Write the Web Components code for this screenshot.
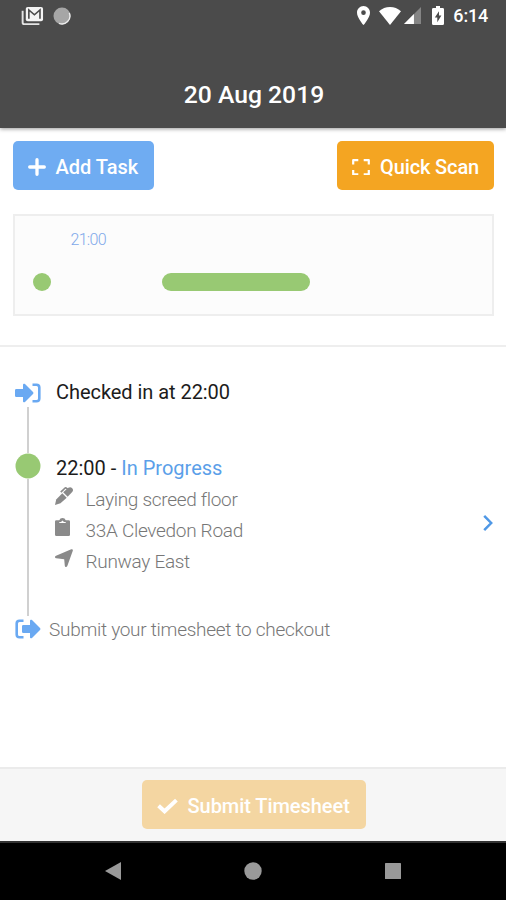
<!DOCTYPE html>
<html lang="en">
<head>
<meta charset="utf-8">
<title>Timesheet</title>
<style>
html, body { margin: 0; height: 100%; background: #fff; }
body { font-family: Roboto, "Liberation Sans", sans-serif; color: #1c1c1c; overflow: hidden; }
</style>
</head>
<body>
<timesheet-app></timesheet-app>
<script>
const define = (name, html, setup) => {
  const template = document.createElement('template');
  template.innerHTML = html;
  customElements.define(name, class extends HTMLElement {
    constructor() {
      super();
      this.attachShadow({ mode: 'open' }).append(template.content.cloneNode(true));
    }
    connectedCallback() { if (setup) setup(this, this.shadowRoot); }
  });
};

const icons = {
  mail: ['0 0 24 21', '<path d="M1.700 5v12.300c0 1 .7 1.700 1.700 1.700h15.800" fill="none" stroke="#e4e4e4" stroke-width="2"/><path d="M7 1h14q2 0 2 2v11q0 2-2 2H7q-2 0-2-2V3q0-2 2-2z" fill="#f4f4f4"/><path d="M8.200 13.500V4.200l5.800 5 5.800-5v9.300" fill="none" stroke="#4b4b4b" stroke-width="1.700"/>'],
  ball: ['0 0 18 18', '<circle cx="9" cy="9" r="8.500" fill="#a6a6a6"/><path d="M16.300 6A7.900 7.900 0 0 1 6 16.300" fill="none" stroke="#eee" stroke-width="1.300"/>'],
  pin: ['5 2 14 20', '<path fill="#fff" d="M12 2C8.100 2 5 5.100 5 9c0 5.300 7 13 7 13s7-7.700 7-13c0-3.900-3.100-7-7-7zm0 9.500a2.500 2.500 0 1 1 0-5 2.500 2.500 0 0 1 0 5z"/>'],
  wifi: ['0 0 22 18', '<path fill="#fff" d="M11 18 0 4.300Q4.700 0 11 0t11 4.300z"/>'],
  cell: ['0 0 18 18', '<path fill="#858585" d="M18 0v18H0z"/><path fill="#fff" d="M10.500 7.500V18H0z"/>'],
  battery: ['0 0 12 20', '<path fill="#fff" d="M4 0h4v2h2.600Q12 2 12 3.400v15.200Q12 20 10.600 20H1.400Q0 20 0 18.600V3.400Q0 2 1.400 2H4z"/><path fill="#4b4b4b" d="M7 5.500 2.800 12H5.300v5L9.400 10H7z"/>'],
  plus: ['0 0 18 18', '<path d="M9 1.700v14.600M1.700 9h14.600" stroke="#fff" stroke-width="3.300" stroke-linecap="round"/>'],
  scan: ['0 0 18 16', '<path d="M1.200 5.300V1.200H6.300M11.700 1.200h5.100V5.300M16.800 10.700v4.100H11.700M6.300 14.800H1.200V10.700" fill="none" stroke="#fff" stroke-width="2.200" stroke-linejoin="round"/>'],
  check: ['0 0 20 15', '<path d="m1.500 7.300 5.700 5.200L18.500 2" fill="none" stroke="#fff" stroke-width="3.800"/>'],
  login: ['0 0 26 20', '<path fill="#6aa9f2" d="M1.300 6H8V1.800c0-1.100 1.200-1.500 2-.8l8 8q1 1 0 2l-8 8c-.8.700-2 .3-2-.8V14H1.300Q0 14 0 12.700V7.300Q0 6 1.300 6z"/><path d="M17.500 1.700h4q2.800 0 2.800 2.800v11q0 2.800-2.800 2.800h-4" fill="none" stroke="#6aa9f2" stroke-width="2.600"/>'],
  logout: ['0 0 26 20', '<path d="M8.500 1.700h-4q-2.800 0-2.800 2.800v11q0 2.800 2.800 2.800h4" fill="none" stroke="#6aa9f2" stroke-width="2.600"/><path fill="#6aa9f2" d="M8.300 6H15V1.800c0-1.100 1.200-1.500 2-.8l8 8q1 1 0 2l-8 8c-.8.700-2 .3-2-.8V14H8.300Q7 14 7 12.700V7.300Q7 6 8.300 6z"/>'],
  pen: ['0 0 18 18', '<path fill="#8a8a8a" d="M0 18 1.200 12.500 7.300 6.300 11.700 10.700 5.500 16.200z"/><path fill="#8a8a8a" d="M8.200 5.300 13.300.8q2-1.300 3.700.2 1.800 1.800.4 3.700L12.700 9.800z"/><path d="M5.800 5.200 9.600 1.500q1-1 2-.2l1 .8" fill="none" stroke="#8a8a8a" stroke-width="1.700"/>'],
  clipboard: ['0 0 14 18', '<path fill="#8a8a8a" d="M1.300 2.200H4Q4.700 0 7 0t3 2.200h2.700Q14 2.200 14 3.500v13.200q0 1.300-1.300 1.300H1.300Q0 18 0 16.700V3.500q0-1.300 1.300-1.300z"/><path d="M4 5h6V4.100H8.400L7 2.400 5.600 4.100H4z" fill="#fff"/>'],
  arrow: ['0 0 18 18', '<path fill="#8a8a8a" d="M16.300.2Q18.200-.2 17.800 1.700l-5.500 15.300q-.5 1-1.300 1-1.200 0-1.200-1.200L9.200 10.200 1.200 9.200q-1.200-.2-1.200-1.300 0-.8 1-1.200z"/>'],
  chevron: ['0 0 12 18', '<path d="m2.200 1.800 7 7.200-7 7.200" fill="none" stroke="#4f98e6" stroke-width="2.500"/>'],
  back: ['0 0 16 18', '<path fill="#999" d="M16 0v18L0 9z"/>'],
  home: ['0 0 18 18', '<circle cx="9" cy="9" r="8.700" fill="#999"/>'],
  recent: ['0 0 16 16', '<rect width="16" height="16" rx=".6" fill="#999"/>'],
  dot: ['0 0 26 26', '<circle cx="13" cy="13" r="12.500" fill="#98c973"/>']
};

define('ui-icon', `<style>:host{display:block;flex:none}svg{display:block;width:100%;height:100%}</style><svg aria-hidden="true" preserveAspectRatio="none"></svg>`, (el, root) => {
  const [box, shapes] = icons[el.getAttribute('name')];
  const svg = root.querySelector('svg');
  svg.setAttribute('viewBox', box);
  svg.innerHTML = shapes;
  el.style.width = el.getAttribute('w') + 'px';
  el.style.height = el.getAttribute('h') + 'px';
});

define('status-bar', `<style>
:host{display:flex;align-items:center;box-sizing:border-box;height:31px;padding:0 18px 0 21px;color:#fff;font-size:18px;font-weight:500;line-height:31px;letter-spacing:-.2px}
.end{display:flex;align-items:center;margin-left:auto}
.battery{margin:0 9px 0 11px}
</style>
<ui-icon name="mail" w="23" h="20"></ui-icon><ui-icon name="ball" w="18" h="18" style="margin-left:9px"></ui-icon>
<div class="end"><ui-icon name="pin" w="13" h="19" style="margin-right:9px"></ui-icon><ui-icon name="wifi" w="22" h="18" style="margin-right:3px"></ui-icon><ui-icon name="cell" w="17" h="17"></ui-icon><ui-icon class="battery" name="battery" w="12" h="19"></ui-icon><slot></slot></div>`);

define('app-header', `<style>
:host{display:block;height:128px;background:#4b4b4b;box-shadow:0 1px 4px rgba(0,0,0,.4);position:relative;flex:none}
h1{margin:0;padding:48px 0 0 2px;font-size:24.700px;line-height:32px;font-weight:500;text-align:center;color:#fff}
</style><slot name="status"></slot><h1><slot></slot></h1>`);

define('action-button', `<style>
:host{display:block;flex:none}
button{display:flex;align-items:center;gap:10px;box-sizing:border-box;width:100%;height:49px;padding:3px 15px 0;border:0;border-radius:5px;background:var(--fill);color:#fff;font:500 20px/28px Roboto,"Liberation Sans",sans-serif;letter-spacing:var(--tracking,0);white-space:nowrap}
</style><button><slot name="icon"></slot><span><slot></slot></span></button>`);

define('time-track', `<style>
:host{display:block;box-sizing:border-box;height:102px;margin:0 12px 0 12.500px;border:2px solid #eee;background:#fcfcfc;padding:13.500px 0 0 18px}
.hour{padding-left:38px;font-size:16px;line-height:20px;font-weight:300;color:#7fa9ea;letter-spacing:-.7px}
.track{display:flex;gap:111px;margin-top:23px}
.track i{height:18px;border-radius:9px;background:#98c973}
</style><div class="hour"><slot></slot></div><div class="track"><i style="width:18px"></i><i style="width:148px"></i></div>`);

define('timeline-entry', `<style>
:host{display:flex;box-sizing:border-box}
.rail{display:flex;flex-direction:column;align-items:center;width:26px;flex:none}
.line{flex:1;width:2px;background:#d0d0d0}
:host([last]) .line{display:none}
.body{flex:1;padding-left:var(--indent,15px)}
</style><div class="rail"><slot name="marker"></slot><div class="line"></div></div><div class="body"><slot></slot></div>`);

define('detail-row', `<style>
:host{display:flex;align-items:flex-start;height:31px;font-weight:300;font-size:19px;line-height:31px;color:#777;letter-spacing:-.3px}
.icon{width:30px;flex:none;padding-top:3px;margin-left:-1px}
.text{padding-left:.5px}
</style><div class="icon"><slot name="icon"></slot></div><div class="text"><slot></slot></div>`);

define('nav-bar', `<style>
:host{display:flex;align-items:center;justify-content:space-between;box-sizing:border-box;height:59px;padding:0 105px 2px;background:#000;border-top:2px solid #333;flex:none}
</style><ui-icon name="back" w="16" h="18"></ui-icon><ui-icon name="home" w="18" h="18"></ui-icon><ui-icon name="recent" w="16" h="16"></ui-icon>`);

define('timesheet-app', `<style>
:host{display:flex;flex-direction:column;width:506px;height:900px;background:#fff}
.actions{display:flex;justify-content:space-between;padding:13px 12px 24px 12.500px}
.overview{height:219px;box-sizing:border-box;border-bottom:2px solid #eee;flex:none}
.list{flex:1;display:flex;align-items:flex-start;padding-left:15px}
.entries{flex:1;padding-top:36px}
.heading{font-size:20px;line-height:24px;white-space:nowrap}
.heading em{font-style:normal;color:#5b9fe9}
.hint{font-size:19px;line-height:24px;font-weight:300;color:#777;letter-spacing:-.28px;margin-top:-1px}
footer{display:flex;justify-content:center;box-sizing:border-box;height:74px;padding:11px 0 0 1px;border-top:2px solid #ebebeb;background:#f6f6f6;flex:none}
</style>
<app-header><status-bar slot="status">6:14</status-bar>20 Aug 2019</app-header>
<section class="overview">
<div class="actions">
<action-button style="--fill:#6facf2;width:141.500px"><ui-icon slot="icon" name="plus" w="18" h="18"></ui-icon>Add Task</action-button>
<action-button style="--fill:#f4a522;width:157px;--tracking:-.12px"><ui-icon slot="icon" name="scan" w="18" h="16.500"></ui-icon>Quick Scan</action-button>
</div>
<time-track>21:00</time-track>
</section>
<main class="list">
<div class="entries">
<timeline-entry style="height:70px"><ui-icon slot="marker" name="login" w="26" h="20" style="margin-bottom:4px"></ui-icon><div class="heading" style="margin-top:-3px;letter-spacing:-.05px">Checked in at 22:00</div></timeline-entry>
<timeline-entry style="height:163px"><ui-icon slot="marker" name="dot" w="26" h="26"></ui-icon>
<div class="heading" style="padding:3px 0 4px">22:00 - <em>In Progress</em></div>
<detail-row><ui-icon slot="icon" name="pen" w="18" h="18"></ui-icon>Laying screed floor</detail-row>
<detail-row><ui-icon slot="icon" name="clipboard" w="15" h="18"></ui-icon>33A Clevedon Road</detail-row>
<detail-row><ui-icon slot="icon" name="arrow" w="18" h="18"></ui-icon>Runway East</detail-row>
</timeline-entry>
<timeline-entry last style="padding-top:3px;--indent:8px"><ui-icon slot="marker" name="logout" w="26" h="20"></ui-icon><div class="hint">Submit your timesheet to checkout</div></timeline-entry>
</div>
<ui-icon name="chevron" w="12" h="18" style="margin:167px 12px 0 0"></ui-icon>
</main>
<footer><action-button style="--fill:#f4d6a2;width:224px;--tracking:-.05px"><ui-icon slot="icon" name="check" w="21" h="16"></ui-icon>Submit Timesheet</action-button></footer>
<nav-bar></nav-bar>`);
</script>
</body>
</html>
